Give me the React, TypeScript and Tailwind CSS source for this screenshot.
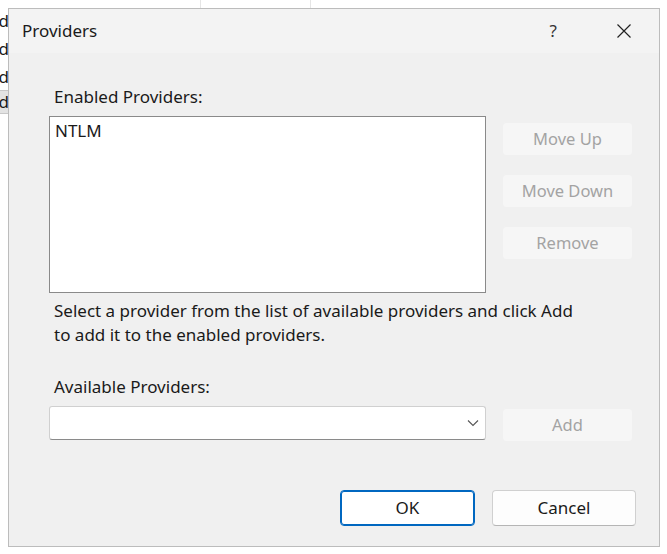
import React from "react";

const font = { fontFamily: '"Segoe UI", "Noto Sans", "Open Sans", sans-serif' };

function DisabledBtn({ label }: { label: string }) {
  return (
    <div className="w-[131px] h-[34px] rounded-[4px] bg-[#f6f6f6] border border-[#f0f0f0] flex items-center justify-center text-[16.5px] text-[#a3a3a3]">
      {label}
    </div>
  );
}

export default function App() {
  return (
    <div className="relative w-[667px] h-[554px] bg-white overflow-hidden text-[#1a1a1a]" style={font}>
      {/* background app fragments */}
      <div className="absolute left-[200px] top-0 w-px h-[8px] bg-[#e5e5e5]" />
      <div className="absolute left-[310px] top-0 w-px h-[8px] bg-[#e5e5e5]" />
      <div className="absolute left-0 top-0 w-[9px] flex flex-col text-[17px] leading-[28px] text-[#1a1a1a]">
        <div className="mt-[7px] flex justify-end overflow-hidden"><span>ed</span></div>
        <div className="flex justify-end overflow-hidden"><span>d</span></div>
        <div className="flex justify-end overflow-hidden"><span>ed</span></div>
        <div className="mt-[-1px] flex justify-end overflow-hidden bg-[#e3e3e3] border-y border-[#c8c8c8] h-[24px] leading-[22px]"><span>d</span></div>
      </div>

      {/* dialog */}
      <div className="absolute left-[8px] top-[8px] w-[652px] h-[539px] border border-[#bcbcbc] bg-[#f0f0f0] flex flex-col">
        <div className="h-[44px] bg-[#f3f3f3] flex items-center pl-[13px] shrink-0">
          <span className="text-[17px] text-[#1a1a1a]">Providers</span>
          <span className="ml-auto text-[17px] text-[#333] mr-[60px]">?</span>
          <svg width="14" height="14" viewBox="0 0 14 14" className="mr-[28px]">
            <path d="M0.5 0.5 L13.5 13.5 M13.5 0.5 L0.5 13.5" stroke="#222" strokeWidth="1.2" fill="none" />
          </svg>
        </div>
        <div className="flex-1 pl-[40px] pr-[25px] pt-[34px] flex flex-col">
          <div className="text-[17px] leading-[20px] ml-[5px]">Enabled Providers:</div>
          <div className="flex mt-[9px]">
            <div className="w-[437px] h-[177px] bg-white border border-[#8a8a8a] px-[5px] pt-[4px] text-[17px] leading-[20px]">NTLM</div>
            <div className="ml-[16px] mt-[6px] flex flex-col gap-[18px]">
              <DisabledBtn label="Move Up" />
              <DisabledBtn label="Move Down" />
              <DisabledBtn label="Remove" />
            </div>
          </div>
          <div className="mt-[6px] ml-[5px] text-[17px] leading-[24px]">
            Select a provider from the list of available providers and click Add
            <br />
            to add it to the enabled providers.
          </div>
          <div className="mt-[30px] ml-[5px] text-[17px] leading-[20px]">Available Providers:</div>
          <div className="flex mt-[9px] items-start">
            <div className="w-[437px] h-[34px] bg-white border border-[#d0d0d0] border-b-[#8a8a8a] rounded-[3px] flex items-center justify-end pr-[6px]">
              <svg width="12" height="8" viewBox="0 0 12 8">
                <path d="M1 1.5 L6 6.5 L11 1.5" stroke="#555" strokeWidth="1.1" fill="none" />
              </svg>
            </div>
            <div className="ml-[16px] mt-[2px]">
              <DisabledBtn label="Add" />
            </div>
          </div>
          <div className="flex justify-end mt-[48px] -mr-[2px] gap-[17px]">
            <div className="w-[135px] h-[36px] rounded-[4px] bg-white border border-[#0067c0] flex items-center justify-center text-[17px] shadow-[inset_0_0_0_1px_#0067c0]">OK</div>
            <div className="w-[144px] h-[36px] rounded-[4px] bg-[#fdfdfd] border border-[#d0d0d0] border-b-[#b5b5b5] flex items-center justify-center text-[17px]">Cancel</div>
          </div>
        </div>
      </div>
    </div>
  );
}
